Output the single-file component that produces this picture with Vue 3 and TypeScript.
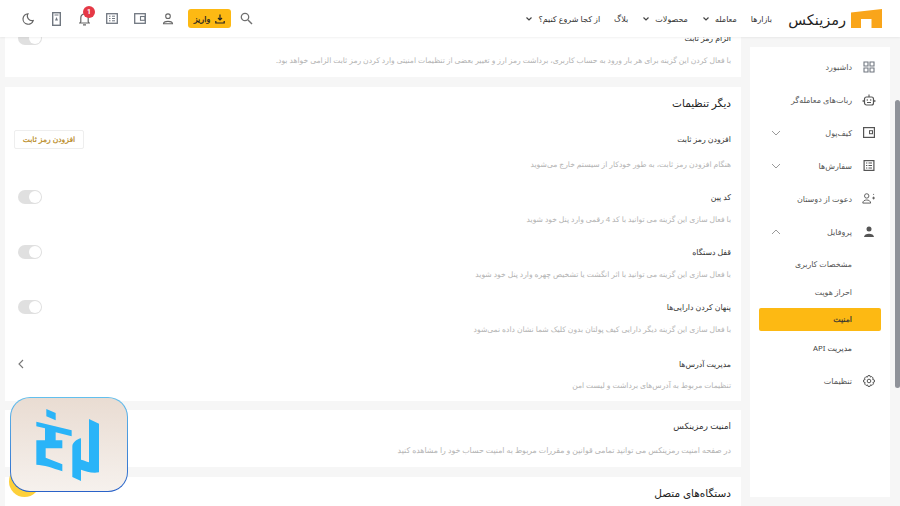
<script setup lang="ts">
const rows = [
  { t: 'افزودن رمز ثابت', d: 'هنگام افزودن رمز ثابت، به طور خودکار از سیستم خارج می‌شوید', kind: 'btn' },
  { t: 'کد پین', d: 'با فعال سازی این گزینه می توانید با کد 4 رقمی وارد پنل خود شوید', kind: 'toggle' },
  { t: 'قفل دستگاه', d: 'با فعال سازی این گزینه می توانید با اثر انگشت یا تشخیص چهره وارد پنل خود شوید', kind: 'toggle' },
  { t: 'پنهان کردن دارایی‌ها', d: 'با فعال سازی این گزینه دیگر دارایی کیف پولتان بدون کلیک شما نشان داده نمی‌شود', kind: 'toggle' },
  { t: 'مدیریت آدرس‌ها', d: 'تنظیمات مربوط به آدرس‌های برداشت و لیست امن', kind: 'arrow' },
]
const nav = [
  { t: 'بازارها', c: false },
  { t: 'معامله', c: true },
  { t: 'محصولات', c: true },
  { t: 'بلاگ', c: false },
  { t: 'از کجا شروع کنیم؟', c: true },
]
</script>

<template>
  <div class="page" dir="rtl">
    <header class="top">
      <div class="brand">
        <svg width="31" height="19" viewBox="0 0 31 19"><path d="M0 3.5 L31 0 V19 H20.500 V10 H10 V19 H0 Z" fill="#f9a51a" /></svg>
        <span class="word">رمزینکس</span>
      </div>
      <nav class="nav">
        <span v-for="n in nav" :key="n.t" class="nav-item">
          {{ n.t }}
          <svg v-if="n.c" width="8" height="6" viewBox="0 0 8 6"><path d="M1.500 1.500 L4 4 L6.500 1.500" fill="none" stroke="#444" stroke-width="1.200" /></svg>
        </span>
      </nav>
      <div class="tools">
        <span class="ic search"><svg width="13" height="13" viewBox="0 0 13 13"><circle cx="5" cy="5" r="3.700" fill="none" stroke="#707070" stroke-width="1.300" /><path d="M8 8 L12 12" stroke="#707070" stroke-width="1.500" /></svg></span>
        <button class="deposit">
          <svg width="10" height="10" viewBox="0 0 10 10"><path d="M5 .5 V6 M3 4 L5 6 L7 4 M.8 7 V9 H9.200 V7" fill="none" stroke="#222" stroke-width="1.200" /></svg>
          <span>واریز</span>
        </button>
        <span class="ic"><svg width="12" height="12" viewBox="0 0 12 12"><circle cx="6" cy="3.200" r="2.300" fill="none" stroke="#666" stroke-width="1.100" /><path d="M1.500 10.800 C1.500 7.500 10.500 7.500 10.500 10.800 Z" fill="none" stroke="#666" stroke-width="1.100" /></svg></span>
        <span class="ic"><svg width="12" height="11" viewBox="0 0 12 11"><rect x=".7" y=".7" width="10.600" height="9.600" fill="none" stroke="#707780" stroke-width="1.300" /><rect x="6.500" y="3.500" width="4.500" height="3.800" fill="none" stroke="#707780" stroke-width="1.100" /></svg></span>
        <span class="ic"><svg width="12" height="11" viewBox="0 0 12 11"><rect x=".7" y=".7" width="10.600" height="9.600" fill="none" stroke="#707780" stroke-width="1.300" /><path d="M3 3.200 H4.500 M6 3.200 H9 M3 5.500 H4.500 M6 5.500 H9 M3 7.800 H4.500 M6 7.800 H9" stroke="#707780" stroke-width="1" /></svg></span>
        <span class="ic bell">
          <svg width="11" height="14" viewBox="0 0 11 14"><path d="M1.800 9.800 V6 C1.800 3.500 3.300 2 5.500 2 C7.700 2 9.200 3.500 9.200 6 V9.800 L10.300 11 H.7 Z M4 12.800 H7" fill="none" stroke="#666" stroke-width="1.200" /></svg>
          <i class="badge">1</i>
        </span>
        <span class="ic"><svg width="9" height="14" viewBox="0 0 9 14"><rect x=".7" y=".7" width="7.600" height="12.600" fill="none" stroke="#707780" stroke-width="1.400" /><path d="M2.500 3 H6.500" stroke="#707780" /><path d="M4.500 5 L6 8.500 H3 Z" fill="#707780" /></svg></span>
        <span class="ic"><svg width="12" height="12" viewBox="0 0 12 12"><path d="M6 .8 A5.200 5.200 0 1 0 11.200 7.500 A4.600 4.600 0 0 1 6 .8 Z" fill="none" stroke="#666" stroke-width="1.200" /></svg></span>
      </div>
    </header>

    <div class="body">
      <aside class="side">
        <div class="s-item">
          <svg width="12" height="12" viewBox="0 0 12 12"><path d="M1 1H5V5H1Z M7 1H11V5H7Z M1 7H5V11H1Z M7 7H11V11H7Z" fill="none" stroke="#707780" stroke-width="1.100" /></svg>
          <span>داشبورد</span>
        </div>
        <div class="s-item">
          <svg width="13" height="12" viewBox="0 0 13 12"><rect x="2" y="3" width="9" height="8" rx="2" fill="none" stroke="#555" stroke-width="1.200" /><path d="M6.500 .5 V3 M.7 6 V8 M12.300 6 V8 M4.500 8.500 H8.500" stroke="#555" stroke-width="1.100" /><circle cx="4.800" cy="6" r=".8" fill="#555" /><circle cx="8.200" cy="6" r=".8" fill="#555" /></svg>
          <span>ربات‌های معامله‌گر</span>
        </div>
        <div class="s-item">
          <svg width="12" height="11" viewBox="0 0 12 11"><rect x=".6" y=".6" width="10.800" height="9.800" fill="none" stroke="#555" stroke-width="1.200" /><rect x="6.500" y="3.700" width="3" height="3" fill="none" stroke="#555" /></svg>
          <span>کیف‌پول</span>
          <svg class="chev" width="10" height="6" viewBox="0 0 10 6"><path d="M1 1 L5 5 L9 1" fill="none" stroke="#9a9a9a" /></svg>
        </div>
        <div class="s-item">
          <svg width="11" height="11" viewBox="0 0 11 11"><rect x=".6" y=".6" width="9.800" height="9.800" fill="none" stroke="#555" stroke-width="1.200" /><path d="M2.500 3H3.800M5 3H8.500M2.500 5.500H3.800M5 5.500H8.500M2.500 8H3.800M5 8H8.500" stroke="#555" /></svg>
          <span>سفارش‌ها</span>
          <svg class="chev" width="10" height="6" viewBox="0 0 10 6"><path d="M1 1 L5 5 L9 1" fill="none" stroke="#9a9a9a" /></svg>
        </div>
        <div class="s-item">
          <svg width="14" height="11" viewBox="0 0 15 12"><circle cx="5" cy="3.200" r="2.400" fill="none" stroke="#555" /><path d="M.7 11 C.7 6.500 9.300 6.500 9.300 11 Z" fill="none" stroke="#555" /><path d="M12.500 1 V2 M12.500 4 V7 M11 5.500 H14" stroke="#555" /></svg>
          <span>دعوت از دوستان</span>
        </div>
        <div class="s-item">
          <svg width="12" height="12" viewBox="0 0 12 12"><circle cx="6" cy="3" r="2.500" fill="#555" /><path d="M1 11 C1 6.500 11 6.500 11 11 Z" fill="#555" /></svg>
          <span>پروفایل</span>
          <svg class="chev" width="10" height="6" viewBox="0 0 10 6"><path d="M1 5 L5 1 L9 5" fill="none" stroke="#9a9a9a" /></svg>
        </div>
        <div class="sub first-sub">مشخصات کاربری</div>
        <div class="sub">احراز هویت</div>
        <div class="sub active">امنیت</div>
        <div class="sub dark">مدیریت API</div>
        <div class="s-item last">
          <svg width="12" height="12" viewBox="0 0 12 12"><circle cx="6" cy="6" r="1.800" fill="none" stroke="#555" /><path d="M5 .6H7L7.400 2.100 8.700 1.500 10.200 3 9.600 4.400 11.400 5V7L9.900 7.500 10.500 8.900 9 10.400 7.600 9.800 7 11.400H5L4.500 9.900 3.100 10.500 1.600 9 2.200 7.600.6 7V5L2.100 4.500 1.500 3.100 3 1.600 4.400 2.200Z" fill="none" stroke="#555" /></svg>
          <span>تنظیمات</span>
        </div>
      </aside>

      <main class="main">
        <section class="card first">
          <div class="row-head"><h4>الزام رمز ثابت</h4><span class="toggle" /></div>
          <p>با فعال کردن این گزینه برای هر بار ورود به حساب کاربری، برداشت رمز ارز و تغییر بعضی از تنظیمات امنیتی وارد کردن رمز ثابت الزامی خواهد بود.</p>
        </section>

        <section class="card second">
          <h3>دیگر تنظیمات</h3>
          <div v-for="r in rows" :key="r.t" class="row" :class="'row-' + r.kind">
            <div class="row-head">
              <h4>{{ r.t }}</h4>
              <button v-if="r.kind === 'btn'" class="add">افزودن رمز ثابت</button>
              <span v-else-if="r.kind === 'toggle'" class="toggle" />
              <svg v-else class="arrow" width="6" height="10" viewBox="0 0 6 10"><path d="M5 1 L1 5 L5 9" fill="none" stroke="#777" stroke-width="1.100" /></svg>
            </div>
            <p>{{ r.d }}</p>
          </div>
        </section>

        <section class="card third">
          <h4 class="big">امنیت رمزینکس</h4>
          <p>در صفحه امنیت رمزینکس می توانید تمامی قوانین و مقررات مربوط به امنیت حساب خود را مشاهده کنید</p>
        </section>

        <section class="card fourth">
          <h3>دستگاه‌های متصل</h3>
        </section>
      </main>
    </div>

    <div class="scrollbar" />
    <span class="fab" />
    <div class="promo">
      <svg width="80" height="84" viewBox="0 0 240 252">
        <g fill="#2ab4f8">
          <path d="M52 18 L80 30 V52 L52 40 Z" />
          <path d="M22 56 L128 82 V100 L80 88 V112 H100 V136 H50 V164 L100 184 V205 C70 194 45 186 22 185 V112 H48 V76 L22 70 Z" />
          <path d="M180 48 L210 62 V208 C190 212 170 205 156 200 V234 L130 222 V130 C130 118 145 108 156 106 V170 C165 172 172 175 180 178 Z" />
        </g>
      </svg>
    </div>
  </div>
</template>

<style>
html, body { margin: 0; overflow: hidden; background: #f6f6f6; }
</style>

<style scoped>
.page {
  position: relative;
  width: 900px;
  height: 506px;
  overflow: hidden;
  background: #f6f6f6;
  font-family: "Noto Sans", "DejaVu Sans", sans-serif;
  color: #333;
}
.top {
  position: absolute;
  inset: 0 0 auto 0;
  height: 37px;
  z-index: 5;
  display: flex;
  align-items: center;
  padding: 0 18px;
  background: #fff;
  box-shadow: 0 1px 2px rgba(0, 0, 0, .06);
}
.brand { display: flex; align-items: center; gap: 5px; }
.word { font-size: 14.500px; color: #222; width: 59px; white-space: nowrap; }
.nav { display: flex; align-items: center; gap: 14px; margin-right: 15px; font-size: 8px; color: #333; }
.nav-item { display: flex; align-items: center; gap: 5px; white-space: nowrap; }
.tools { margin-right: auto; display: flex; align-items: center; gap: 14px; padding-left: 3px; }
.ic { width: 14px; height: 16px; display: flex; align-items: center; justify-content: center; }
.search { margin-left: -6px; }
.deposit {
  width: 43px; height: 19px; border: 0; border-radius: 3px; padding: 0; background: #fdb913;
  display: flex; align-items: center; justify-content: center; gap: 5px; margin-left: -1px;
  font: 400 8px "Noto Sans", "DejaVu Sans", sans-serif; color: #222;
  -webkit-text-stroke: .25px #222;
}
.bell { position: relative; }
.badge {
  position: absolute; top: -5px; left: 6px; width: 12px; height: 12px; border-radius: 50%;
  background: #e53946; color: #fff; font: 700 7px/12px "Roboto", sans-serif; text-align: center;
}
.body { display: flex; align-items: flex-start; padding: 0 10px 0 5px; gap: 9px; margin-top: 19px; }
.side {
  width: 140px; flex: none; height: 450px; margin-top: 28px; padding-top: 3px;
  box-sizing: border-box; background: #fff; display: flex; flex-direction: column; font-size: 8px;
}
.s-item { height: 33px; flex: none; display: flex; align-items: center; gap: 10px; padding: 0 14px 0 21px; color: #555; }
.s-item > svg:first-child { width: 14px; flex: none; }
.chev { margin-right: auto; }
.sub { height: 28px; flex: none; margin: 0 9px; padding-right: 29px; line-height: 28px; color: #555; font-size: 7.800px; }
.first-sub { margin-top: 2px; }
.sub.active { height: 23px; line-height: 23px; margin-block: 2px 3px; background: #fdb913; border-radius: 2px; color: #333; -webkit-text-stroke: .2px #333; }
.sub.dark { color: #444; }
.last { margin-top: 2px; }
.main { flex: 1; min-width: 0; display: flex; flex-direction: column; gap: 10px; }
.card { background: #fff; padding: 0 10px; }
.first { height: 58px; box-sizing: border-box; padding-top: 9px; }
.second { height: 314px; box-sizing: border-box; padding-top: 8px; }
.third { height: 57px; box-sizing: border-box; padding-top: 9px; margin-top: -1px; }
.fourth { height: 40px; padding-top: 8px; }
h3 { margin: 0; font-size: 10.500px; font-weight: 500; color: #222; line-height: 16px; }
h4 { margin: 0; font-size: 7.800px; font-weight: 500; color: #333; line-height: 14px; }
h4.big { font-size: 8.700px; color: #333; }
p { margin: 0; font-size: 7.600px; line-height: 14px; color: #b3b3b3; white-space: nowrap; }
.second h3 { margin-bottom: 18px; }
.row { height: 55px; box-sizing: border-box; }
.row-btn { height: 58px; }
.row-btn .row-head { margin-bottom: 8px; }
.row-arrow { margin-top: 2px; }
.row-arrow .row-head { margin-bottom: 4px; }
.row-head { display: flex; align-items: center; justify-content: space-between; height: 20px; margin-bottom: 5px; }
.third p { margin-top: 10px; font-size: 7.800px; }
.add {
  width: 70px; height: 19px; margin-left: -1px; border: 1px solid #eee; border-radius: 2px; background: #fff; padding: 0;
  font: 400 7.600px "Noto Sans", "DejaVu Sans", sans-serif; color: #b8881a; -webkit-text-stroke: .2px #b8881a;
}
.toggle { position: relative; width: 24px; height: 14px; margin-left: 3px; border-radius: 7px; background: #e0e0e0; display: block; }
.toggle::after {
  content: ""; position: absolute; top: 1px; right: 1px; width: 12px; height: 12px; border-radius: 50%; background: #fff;
}
.arrow { margin-left: 3px; }
.scrollbar { position: absolute; top: 100px; right: 0; width: 5px; height: 288px; background: #8f9299; border-radius: 3px; }
.fab { position: absolute; top: 466px; left: 9px; width: 31px; height: 31px; border-radius: 50%; background: #fdd03a; }
.promo {
  position: absolute; top: 397px; left: 10px; width: 118px; height: 95px; box-sizing: border-box;
  border: 1px solid transparent; border-radius: 20px;
  background: linear-gradient(#e9dcd2, #f6f1ed) padding-box, linear-gradient(#63c0ee, #2a62c8) border-box;
  display: flex; align-items: center; justify-content: center;
}
</style>
